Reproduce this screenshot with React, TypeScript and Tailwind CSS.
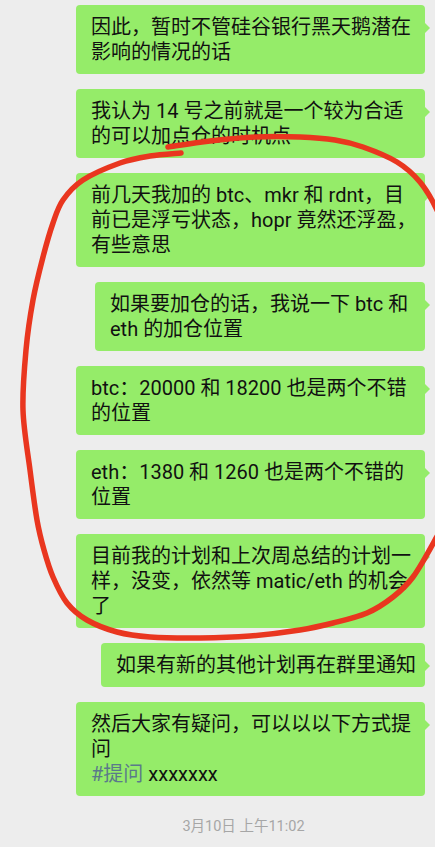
type Msg = { lines: string[]; width: string; tag?: boolean };

const messages: Msg[] = [
  { lines: ['因此，暂时不管硅谷银行黑天鹅潜在', '影响的情况的话'], width: 'w-[349px]' },
  { lines: ['我认为 14 号之前就是一个较为合适', '的可以加点仓的时机点'], width: 'w-[349px]' },
  {
    lines: ['前几天我加的 btc、mkr 和 rdnt，目', '前已是浮亏状态，hopr 竟然还浮盈，', '有些意思'],
    width: 'w-[349px]',
  },
  { lines: ['如果要加仓的话，我说一下 btc 和', 'eth 的加仓位置'], width: 'w-[330px]' },
  { lines: ['btc：20000 和 18200 也是两个不错', '的位置'], width: 'w-[349px]' },
  { lines: ['eth：1380 和 1260 也是两个不错的', '位置'], width: 'w-[349px]' },
  {
    lines: ['目前我的计划和上次周总结的计划一', '样，没变，依然等 matic/eth 的机会', '了'],
    width: 'w-[349px]',
  },
  { lines: ['如果有新的其他计划再在群里通知'], width: 'w-[324px]' },
  { lines: ['然后大家有疑问，可以以以下方式提', '问'], width: 'w-[349px]', tag: true },
];

// hand drawn loop, traced from the screenshot
const loop: [number, number][] = [
  [168, 147], [210, 141], [255, 137], [300, 137], [335, 140], [363, 147], [397, 162],
  [420, 182], [437, 210], [462, 270], [470, 400], [455, 500], [435, 540], [413, 577],
  [393, 597], [367, 613], [333, 623], [300, 630], [250, 636], [200, 638], [150, 637],
  [117, 632], [87, 620], [67, 603], [53, 577], [44, 550], [37, 520], [30, 470],
  [23, 410], [26, 350], [33, 300], [43, 257], [53, 223], [63, 200], [83, 180],
  [120, 163], [150, 156], [181, 153],
];

const smoothPath = (pts: [number, number][]) => {
  let d = `M ${pts[0][0]} ${pts[0][1]}`;
  for (let i = 0; i < pts.length - 1; i++) {
    const p0 = pts[i - 1] || pts[i];
    const p1 = pts[i];
    const p2 = pts[i + 1];
    const p3 = pts[i + 2] || p2;
    const c1x = p1[0] + (p2[0] - p0[0]) / 6;
    const c1y = p1[1] + (p2[1] - p0[1]) / 6;
    const c2x = p2[0] - (p3[0] - p1[0]) / 6;
    const c2y = p2[1] - (p3[1] - p1[1]) / 6;
    d += ` C ${c1x} ${c1y} ${c2x} ${c2y} ${p2[0]} ${p2[1]}`;
  }
  return d;
};

const Bubble = ({ msg }: { msg: Msg }) => {
  return (
    <div className={`relative ml-auto ${msg.width} rounded-[4px] bg-[#95ec69] px-[15px] py-[9.5px]`}>
      <div className="absolute right-[-5px] top-[18px] h-0 w-0 border-y-[5px] border-l-[5px] border-y-transparent border-l-[#95ec69]" />
      {msg.lines.map((line, i) => (
        <div key={i} className="whitespace-nowrap text-[20px] leading-[25px] text-[#111111]">
          {line}
        </div>
      ))}
      {msg.tag && (
        <div className="whitespace-nowrap text-[20px] leading-[25px] text-[#111111]">
          <span className="text-[#5a7a8a]">#提问</span> xxxxxxx
        </div>
      )}
    </div>
  );
};

export default function App() {
  return (
    <div
      className="relative h-[847px] w-[435px] overflow-hidden bg-[#ededed]"
      style={{ fontFamily: 'Roboto, "Noto Sans CJK SC", sans-serif' }}
    >
      <div className="flex flex-col gap-[15px] pt-[5px] pr-[10px]">
        {messages.map((m, i) => (
          <Bubble key={i} msg={m} />
        ))}
      </div>
      <div className="mt-[21px] pl-[52px] text-center text-[14.5px] leading-[20px] text-[#a6a6a6]">
        3月10日 上午11:02
      </div>
      <svg className="pointer-events-none absolute left-0 top-0" width="435" height="847">
        <path
          d={smoothPath(loop)}
          fill="none"
          stroke="#e9361f"
          strokeWidth={5.5}
          strokeLinecap="round"
          strokeLinejoin="round"
        />
      </svg>
    </div>
  );
}
